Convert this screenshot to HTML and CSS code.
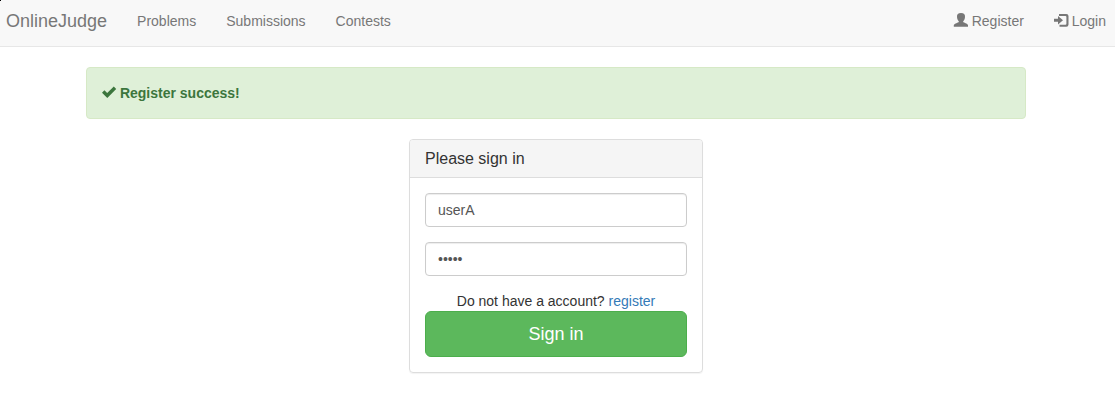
FILE: index.html
```
<!DOCTYPE html>
<html lang="en">
<head>
<meta charset="utf-8">
<title>OnlineJudge - Sign in</title>
<link rel="stylesheet" href="styles.css">
</head>
<body>
<nav class="navbar">
  <a class="brand" href="#">OnlineJudge</a>
  <a class="nav-link" href="#">Problems</a>
  <a class="nav-link" href="#">Submissions</a>
  <a class="nav-link" href="#">Contests</a>
  <div class="nav-right">
    <a class="nav-link" href="#"><svg class="icon" viewBox="0 0 14 14" aria-hidden="true"><path d="M7 0C9.900 0 11.200 1.500 11 4C10.900 5.800 10.200 7.400 9.200 8.200V9C9.700 9.800 13.400 10.300 14 12V13.800H-.2V12C.6 10.300 4.300 9.800 4.800 9V8.200C3.800 7.400 3.100 5.800 3 4C2.800 1.500 4.100 0 7 0Z"/></svg> Register</a>
    <a class="nav-link" href="#"><svg class="icon" viewBox="0 0 14 14" aria-hidden="true"><path d="M5 1H12.300Q14.500 1 14.500 3V11.500Q14.500 13.700 12.300 13.700H5.500V11.700H11.500Q12.400 11.700 12.400 10.700V4Q12.400 3 11.500 3H5ZM4 3L9 7.300L4 11.600V8.800H0V5.800H4Z"/></svg> Login</a>
  </div>
</nav>
<main class="container">
  <div class="alert" role="alert"><svg class="icon" viewBox="0 0 14 14" aria-hidden="true"><path d="M0 7.700L2.400 5.300L5.200 7.900L11.800 1.500L14.200 3.900L5.300 13Z"/></svg> <strong>Register success!</strong></div>
  <section class="panel">
    <h1 class="panel-title">Please sign in</h1>
    <form class="panel-body">
      <input class="field" type="text" value="userA" aria-label="Username">
      <input class="field" type="password" value="userA" aria-label="Password">
      <p class="hint">Do not have a account? <a class="link" href="#">register</a></p>
      <button class="submit" type="button">Sign in</button>
    </form>
  </section>
</main>
</body>
</html>
```
FILE: styles.css
```
* { box-sizing: border-box; }
body {
  margin: 0;
  padding-right: 3px;
  background: #fff;
  color: #333;
  font-family: "Liberation Sans", Arial, sans-serif;
  font-size: 14px;
  line-height: 20px;
}
body::before {
  content: "";
  position: absolute;
  top: 0;
  left: 0;
  width: 1px;
  height: 1px;
  background: #000;
}
.navbar {
  display: flex;
  align-items: flex-start;
  min-height: 47px;
  margin-right: -3px;
  padding: 0 9px 0 6px;
  background: #f8f8f8;
  border-bottom: 1px solid #e7e7e7;
}
.brand, .nav-link {
  color: #777;
  text-decoration: none;
  padding: 11px 15px;
}
.brand { font-size: 18px; padding-left: 0; }
.nav-right { display: flex; margin-left: auto; }
.nav-right .nav-link:last-child { padding-right: 0; }
.icon {
  width: 14px;
  height: 14px;
  fill: currentColor;
  overflow: visible;
  vertical-align: -1px;
}
.container {
  max-width: 970px;
  margin: 0 auto;
  padding: 20px 15px;
}
.alert {
  padding: 15px;
  margin-bottom: 20px;
  color: #3c763d;
  background: #dff0d8;
  border: 1px solid #d6e9c6;
  border-radius: 4px;
}
.panel {
  width: 100%;
  max-width: 294px;
  margin: 0 auto;
  border: 1px solid #ddd;
  border-radius: 4px;
  box-shadow: 0 1px 1px rgba(0, 0, 0, .05);
}
.panel-title {
  margin: 0;
  padding: 10px 15px;
  font-size: 16px;
  font-weight: 400;
  line-height: 17px;
  background: #f5f5f5;
  border-bottom: 1px solid #ddd;
  border-radius: 3px 3px 0 0;
}
.panel-body { padding: 15px; }
.field {
  display: block;
  width: 100%;
  height: 34px;
  margin-bottom: 15px;
  padding: 6px 12px;
  font: inherit;
  color: #555;
  background: #fff;
  border: 1px solid #ccc;
  border-radius: 4px;
  box-shadow: inset 0 1px 1px rgba(0, 0, 0, .075);
}
.hint { margin: 0; text-align: center; }
.link { color: #337ab7; text-decoration: none; }
.submit {
  display: block;
  width: 100%;
  padding: 10px 16px;
  font-family: inherit;
  font-size: 18px;
  line-height: 24px;
  color: #fff;
  background: #5cb85c;
  border: 1px solid #4cae4c;
  border-radius: 6px;
}
```
